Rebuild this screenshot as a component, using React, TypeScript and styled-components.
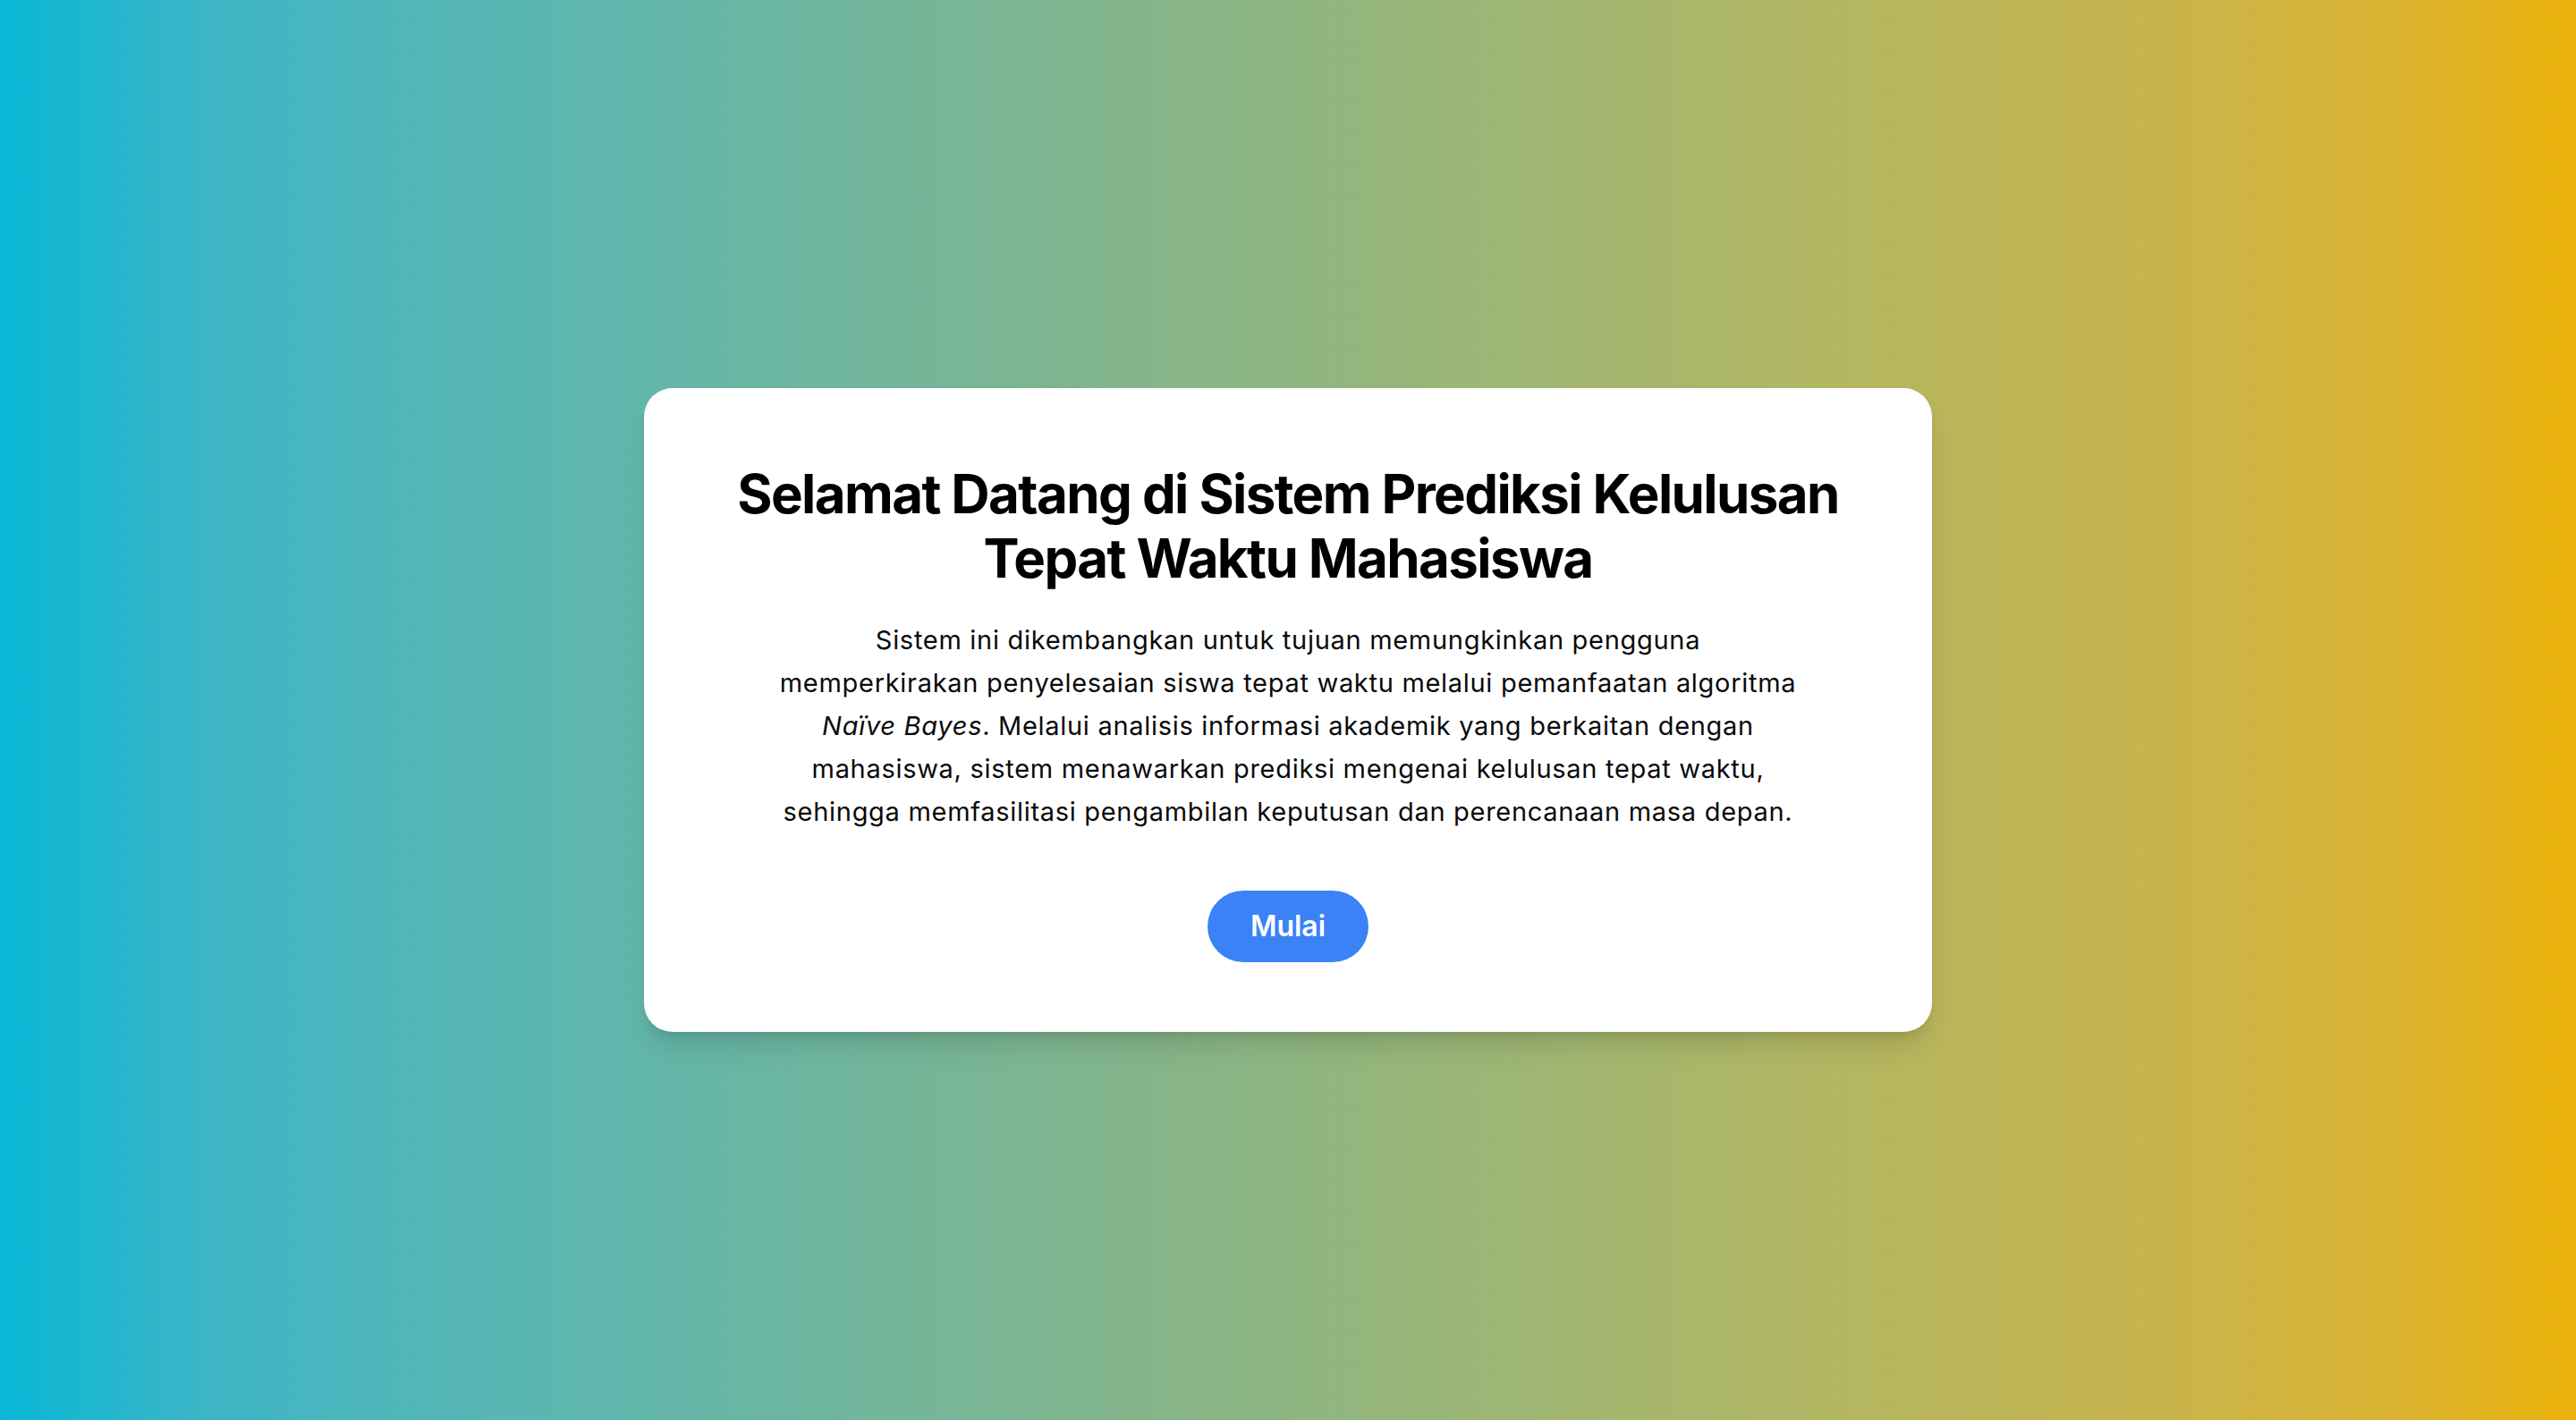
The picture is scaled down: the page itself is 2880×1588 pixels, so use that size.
import React from "react";
import styled, { createGlobalStyle } from "styled-components";

const GlobalStyle = createGlobalStyle`
  html, body {
    margin: 0;
    padding: 0;
  }
  body {
    font-family: Inter, "Noto Sans", "Liberation Sans", sans-serif;
    color: #000;
  }
  * { box-sizing: border-box; }
`;

const Page = styled.main`
  min-height: 100vh;
  display: flex;
  align-items: center;
  justify-content: center;
  background: linear-gradient(
    to right,
    #08b7d6 0%,
    #3db5c6 8%,
    #56b6b5 18%,
    #6bb6a2 30%,
    #80b58e 42%,
    #8eb581 50%,
    #a0b672 60%,
    #b4b661 72%,
    #c8b44c 84%,
    #dab231 93%,
    #ebb20a 100%
  );
`;

const Card = styled.section`
  width: 1440px;
  background: #ffffff;
  border-radius: 32px;
  padding: 82px 80px 78px;
  display: flex;
  flex-direction: column;
  align-items: center;
  text-align: center;
  box-shadow: 0 20px 30px -6px rgba(0, 0, 0, 0.12), 0 8px 12px -6px rgba(0, 0, 0, 0.1);
`;

const Title = styled.h1`
  margin: 0 0 32px;
  font-size: 60px;
  line-height: 72px;
  font-weight: 700;
  letter-spacing: -1.6px;
  white-space: nowrap;
  color: #000;
`;

const Description = styled.p`
  margin: 0;
  font-size: 29px;
  line-height: 48px;
  font-weight: 400;
  letter-spacing: 0.7px;
  white-space: nowrap;
  color: #0a0a0a;
`;

const Button = styled.button`
  margin-top: 64px;
  height: 80px;
  padding: 0 48px;
  border: none;
  border-radius: 9999px;
  background: #3b82f6;
  color: #ffffff;
  font-family: inherit;
  font-size: 32px;
  line-height: 48px;
  font-weight: 600;
  cursor: pointer;
`;

export default function App() {
  return (
    <>
      <GlobalStyle />
      <Page>
        <Card>
          <Title>
            Selamat Datang di Sistem Prediksi Kelulusan
            <br />
            Tepat Waktu Mahasiswa
          </Title>
          <Description>
            Sistem ini dikembangkan untuk tujuan memungkinkan pengguna
            <br />
            memperkirakan penyelesaian siswa tepat waktu melalui pemanfaatan algoritma
            <br />
            <em>Naïve Bayes</em>. Melalui analisis informasi akademik yang berkaitan dengan
            <br />
            mahasiswa, sistem menawarkan prediksi mengenai kelulusan tepat waktu,
            <br />
            sehingga memfasilitasi pengambilan keputusan dan perencanaan masa depan.
          </Description>
          <Button type="button">Mulai</Button>
        </Card>
      </Page>
    </>
  );
}
